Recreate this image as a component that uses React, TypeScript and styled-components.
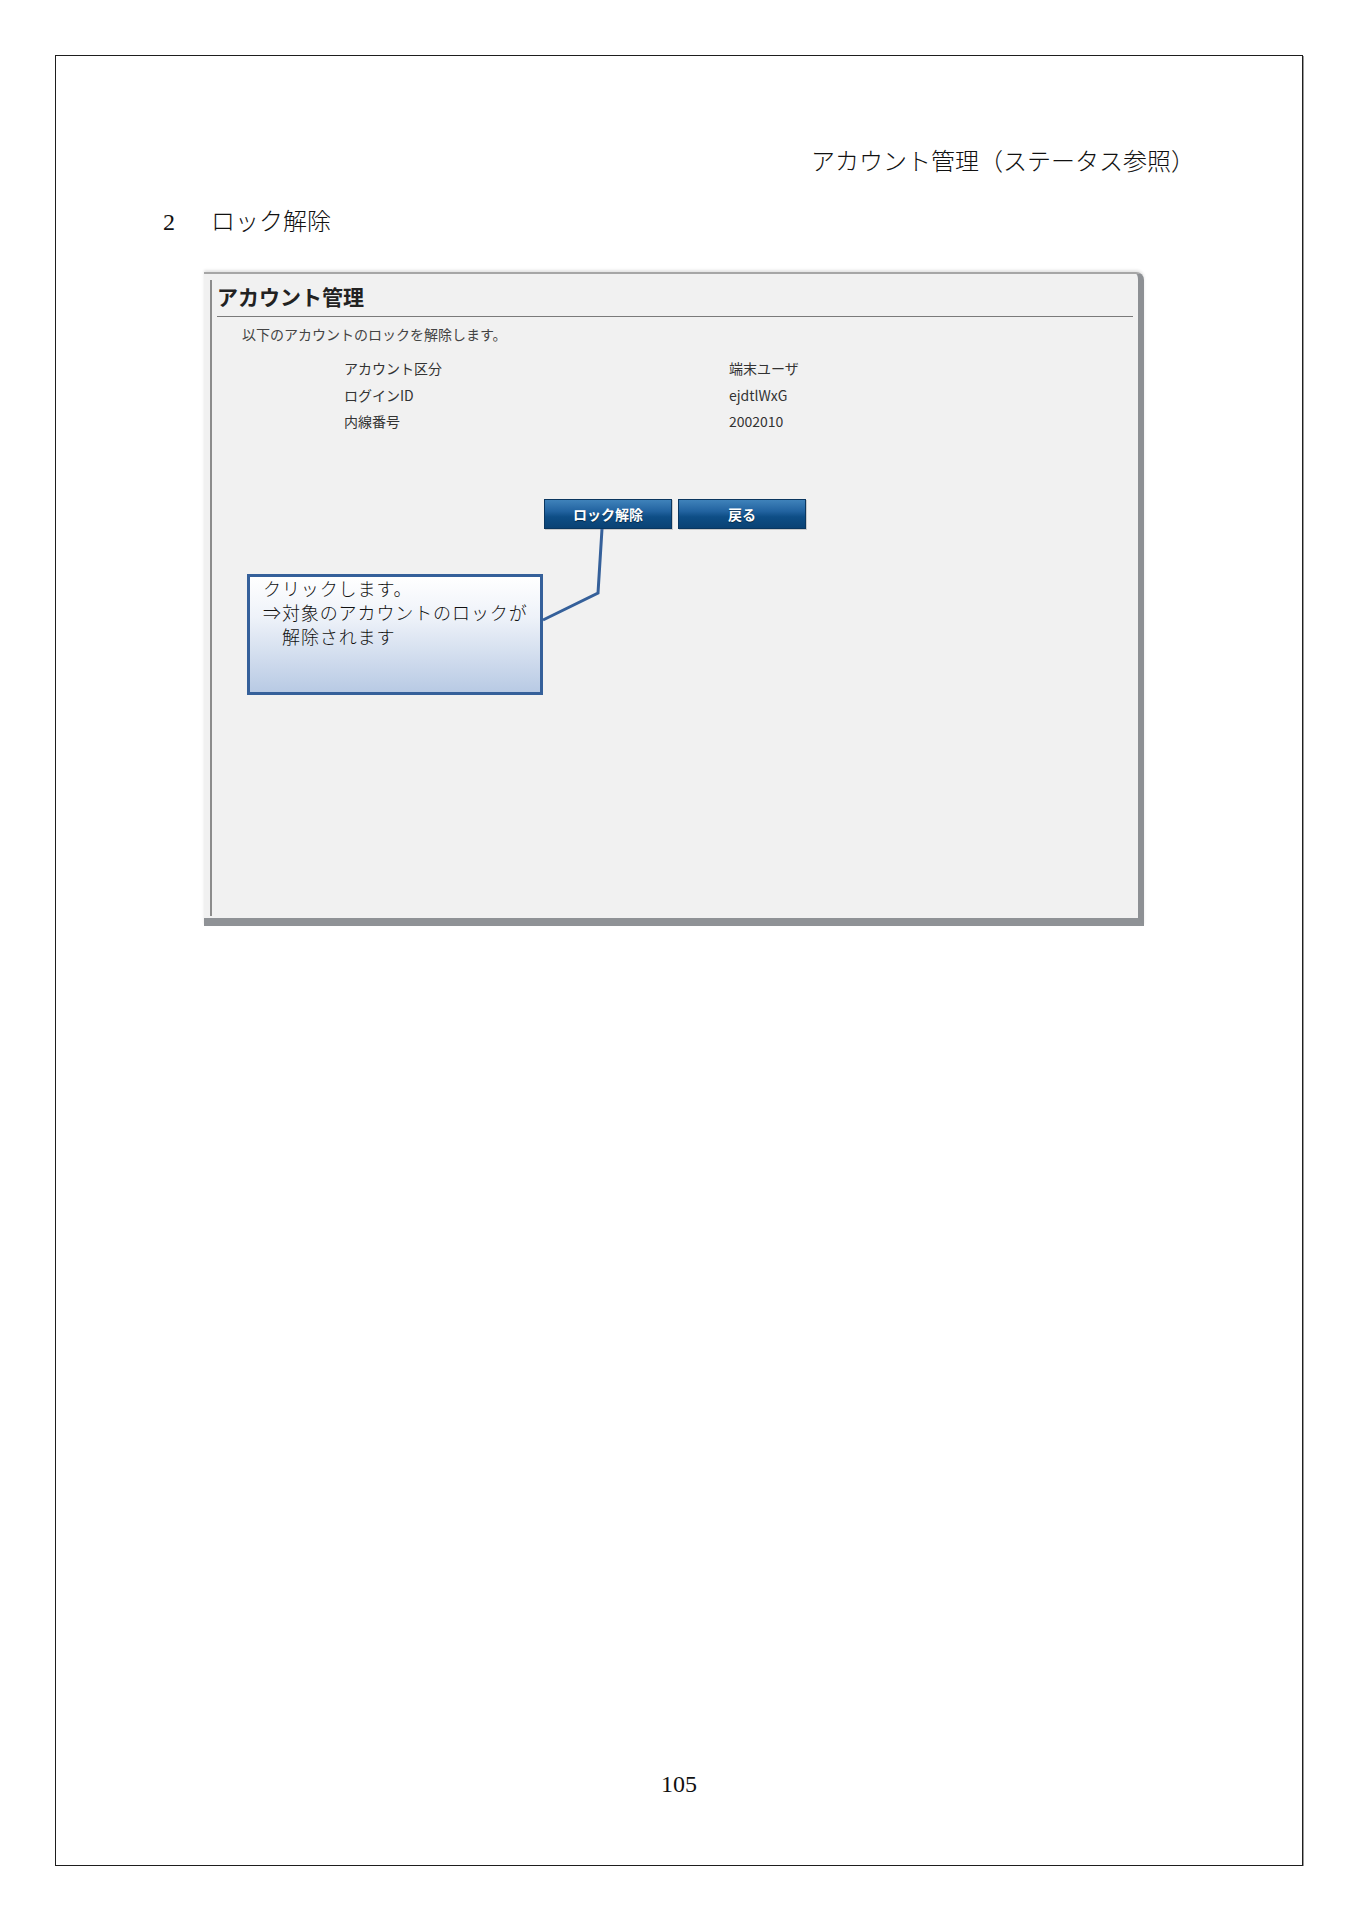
import styled, { createGlobalStyle } from 'styled-components';

const GlobalStyle = createGlobalStyle`
  html, body {
    margin: 0;
    padding: 0;
    background: #ffffff;
  }
  body {
    font-family: "Liberation Serif", "Noto Sans CJK JP", serif;
    color: #111111;
  }
`;

const Sheet = styled.div`
  box-sizing: border-box;
  width: 1248px;
  height: 1811px;
  margin: 55px 0 0 55px;
  border: 1px solid #1e1e1e;
  box-shadow: 1px 1px 0 #9a9a9a;
  display: flex;
  flex-direction: column;
`;

const RunningHead = styled.div`
  padding: 91px 107px 0 0;
  text-align: right;
  font-size: 24px;
  line-height: 30px;
  font-weight: 300;
`;

const SectionTitle = styled.h2`
  display: flex;
  margin: 30px 0 0 107px;
  font-size: 24px;
  line-height: 30px;
  font-weight: 300;
`;

const SectionNo = styled.span`
  width: 48px;
`;

const Window = styled.div`
  position: relative;
  box-sizing: border-box;
  width: 940px;
  height: 654px;
  margin: 35px 0 0 148px;
  padding: 6px 0 2px 6px;
  display: flex;
  background: #f1f1f1;
  border-top: 2px solid #a6a6a6;
  border-right: 6px solid #8d9094;
  border-bottom: 8px solid #8f9296;
  border-top-right-radius: 8px;
  box-shadow: 0 -2px 3px #e4e4e4;
  font-family: "Noto Sans CJK JP", "Liberation Sans", sans-serif;
  color: #333333;
`;

const Frame = styled.div`
  flex: 1;
  display: flex;
  flex-direction: column;
  border-left: 2px solid #8c8c8c;
`;

const ScreenTitle = styled.h1`
  margin: 5px 5px 0 5px;
  padding-bottom: 9px;
  border-bottom: 1px solid #7a7a7a;
  font-size: 21px;
  line-height: 22px;
  font-weight: 700;
  color: #222222;
`;

const Lead = styled.p`
  margin: 7px 0 0 30px;
  font-size: 14px;
  line-height: 20px;
  color: #444444;
`;

const InfoGrid = styled.dl`
  display: grid;
  grid-template-columns: 385px auto;
  grid-auto-rows: 26.5px;
  align-items: center;
  margin: 11px 0 0 132px;
  font-size: 14px;
`;

const InfoLabel = styled.dt`
  margin: 0;
`;

const InfoValue = styled.dd`
  margin: 0;
`;

const ButtonRow = styled.div`
  display: flex;
  justify-content: center;
  gap: 6px;
  margin-top: 64px;
`;

const ActionButton = styled.button`
  box-sizing: border-box;
  width: 128px;
  height: 30px;
  padding: 0;
  border: 1px solid #0a365f;
  background: linear-gradient(#3f82ba 0%, #2263a0 40%, #0e4e86 60%, #0a4274 100%);
  color: #ffffff;
  font-family: "Noto Sans CJK JP", sans-serif;
  font-size: 14px;
  font-weight: 700;
  text-shadow: 0 1px 1px rgba(0, 0, 0, 0.45);
  box-shadow: 1px 1px 0 #c9c9c9;
`;

const Callout = styled.div`
  position: absolute;
  left: 43px;
  top: 300px;
  box-sizing: border-box;
  width: 296px;
  height: 121px;
  padding: 1px 0 0 13px;
  border: 3px solid #35609a;
  background: linear-gradient(#ffffff 0%, #eef2f9 35%, #b8cae4 100%);
  font-family: "Liberation Serif", "Noto Sans CJK JP", serif;
  font-size: 18px;
  line-height: 24px;
  font-weight: 300;
  letter-spacing: 0.9px;
  color: #111111;
`;

const CalloutLine = styled.div<{ $indent?: boolean }>`
  padding-left: ${p => (p.$indent ? '19px' : '0')};
`;

const Leader = styled.svg`
  position: absolute;
  left: 0;
  top: 0;
  width: 100%;
  height: 100%;
  pointer-events: none;
  overflow: visible;
`;

const PageNo = styled.div`
  margin-top: auto;
  padding-bottom: 66px;
  text-align: center;
  font-size: 24px;
  line-height: 30px;
`;

const info = [
  { label: 'アカウント区分', value: '端末ユーザ' },
  { label: 'ログインID', value: 'ejdtlWxG' },
  { label: '内線番号', value: '2002010' },
];

const App = () => {
  return (
    <>
      <GlobalStyle />
      <Sheet>
        <RunningHead>アカウント管理（ステータス参照）</RunningHead>
        <SectionTitle>
          <SectionNo>2</SectionNo>
          ロック解除
        </SectionTitle>

        <Window>
          <Frame>
            <ScreenTitle>アカウント管理</ScreenTitle>
            <Lead>以下のアカウントのロックを解除します。</Lead>
            <InfoGrid>
              {info.map(item => (
                <div key={item.label} style={{ display: 'contents' }}>
                  <InfoLabel>{item.label}</InfoLabel>
                  <InfoValue>{item.value}</InfoValue>
                </div>
              ))}
            </InfoGrid>
            <ButtonRow>
              <ActionButton>ロック解除</ActionButton>
              <ActionButton>戻る</ActionButton>
            </ButtonRow>
          </Frame>

          <Leader>
            <polyline
              points="398,255 394,319 339,346"
              fill="none"
              stroke="#35609a"
              strokeWidth="3"
              strokeLinejoin="miter"
            />
          </Leader>
          <Callout>
            <CalloutLine>クリックします。</CalloutLine>
            <CalloutLine>⇒対象のアカウントのロックが</CalloutLine>
            <CalloutLine $indent>解除されます</CalloutLine>
          </Callout>
        </Window>

        <PageNo>105</PageNo>
      </Sheet>
    </>
  );
};

export default App;
